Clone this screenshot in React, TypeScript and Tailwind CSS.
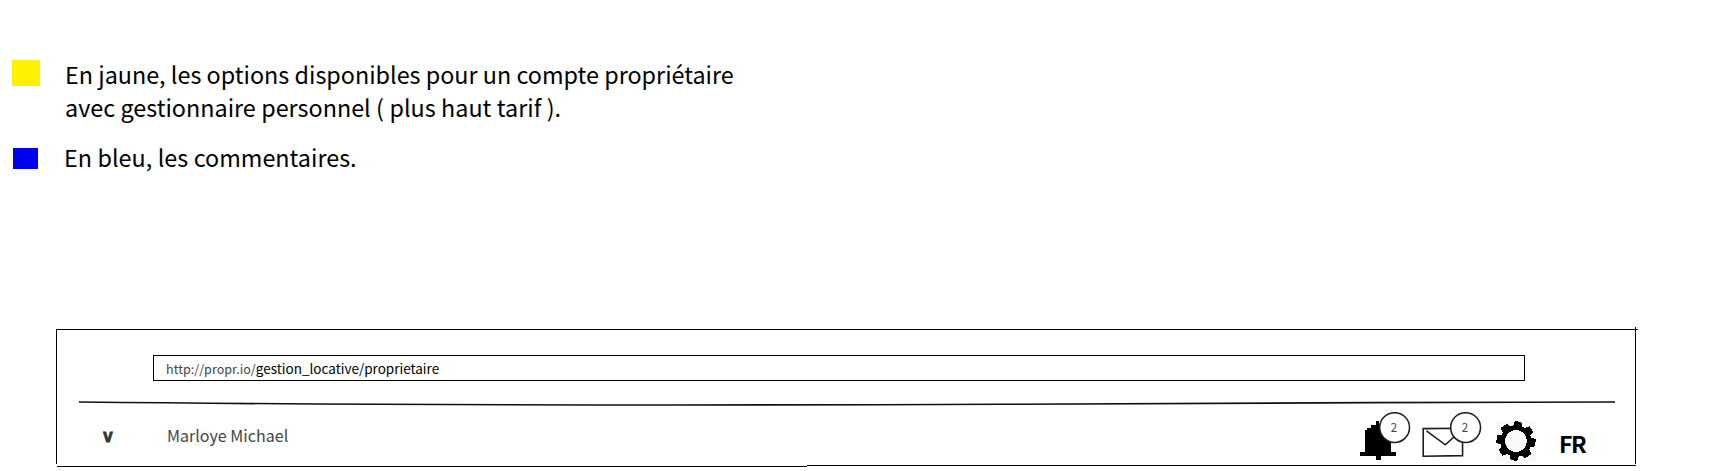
function Bell() {
  return (
    <svg className="block" width="36" height="40" viewBox="0 0 36 40" shapeRendering="crispEdges">
      <path fill="#000" d="M16 0h3v3h4v3h4v3h4v22h5v4H21v4h-5v-4H0v-4h5V9h2V7h4V4h5z" />
    </svg>
  );
}

function Envelope() {
  return (
    <svg className="block" width="42" height="31" viewBox="0 0 42 31" fill="none" stroke="#1d1d20" strokeWidth="1.6">
      <path d="M1.2 1.6L40.5 1.2L40.6 28.6L1.2 29.2Z" />
      <path d="M4.5 3.8L23.3 17.8L38 4.5" />
    </svg>
  );
}

function Gear() {
  return (
    <svg className="block bg-[#f9f9f9]" width="40" height="40" viewBox="-20 -20 40 40" shapeRendering="crispEdges">
      <circle r="13.2" fill="#f9f9f9" stroke="#000" strokeWidth="4.6" />
      {[9, 54, 97, 142, 189, 234, 277, 322].map((a) => (
        <path key={a} transform={`rotate(${a})`} d="M-5.5 -14L-4 -19.8L3.4 -19L4 -14Z" fill="#000" />
      ))}
    </svg>
  );
}

function Badge({ className }: { className: string }) {
  return (
    <svg className={`absolute ${className}`} width="32" height="32" viewBox="0 0 32 32">
      <circle cx="15.6" cy="15.6" r="14.9" fill="#fff" stroke="#1d1d20" strokeWidth="1.5" />
      <text x="15" y="19.8" textAnchor="middle" fontSize="11.5" fill="#444">2</text>
    </svg>
  );
}

export default function App() {
  return (
    <main className="flex h-[471px] w-[1712px] flex-col overflow-hidden bg-white pt-[58px] font-['Noto_Sans_CJK_SC',sans-serif] text-black">
      <section className="flex h-[271px] flex-col gap-[17px] pl-3 text-[23.35px] leading-[33px]">
        <div className="flex gap-[25px]">
          <span className="mt-0.5 h-[26px] w-7 bg-[#fff200]" />
          <p className="whitespace-nowrap">
            En jaune, les options disponibles pour un compte propriétaire
            <br />
            <span className="[word-spacing:0.2px]">avec gestionnaire personnel ( plus haut tarif ).</span>
          </p>
        </div>
        <div className="flex gap-[26px] pl-px">
          <span className="mt-[7px] h-[21px] w-[25px] bg-[#0000ee]" />
          <p className="whitespace-nowrap [word-spacing:0.3px]">En bleu, les commentaires.</p>
        </div>
      </section>

      <section className="relative ml-14 flex h-[138px] w-[1580px] flex-col pt-[26px]">
        <svg className="absolute -top-2 left-0" width="1590" height="150" viewBox="56 321 1590 150">
          <g fill="#000" shapeRendering="crispEdges">
            <rect x="56" y="329" width="1582" height="1" />
            <rect x="56" y="329" width="1" height="135" />
            <rect x="1635" y="327" width="1" height="137" />
            <rect x="57" y="466" width="750" height="1" />
            <rect x="807" y="465" width="829" height="1" />
          </g>
          <path d="M79 402C420 405.8 760 405.2 1000 404.3S1400 402.2 1615 402" fill="none" stroke="#111" strokeWidth="1.6" />
        </svg>
        <div className="mx-[97px] flex h-[26px] w-[1372px] items-baseline border border-black pl-3 leading-6 whitespace-nowrap">
          <span className="text-[12.5px] tracking-[0.05px] text-[#444]">http://propr.io/</span>
          <span className="text-[13.5px]">gestion_locative/proprietaire</span>
        </div>
        <div className="relative flex items-center pt-10 pl-[47px]">
          <span className="mt-0.5 w-16 self-start text-[17px] leading-6 font-bold text-[#333] [-webkit-text-stroke:0.8px_#333]">v</span>
          <span className="mt-0.5 w-[1193px] self-start text-base leading-6 tracking-[0.03px] text-[#444]">Marloye Michael</span>
          <div className="relative mr-[26px]">
            <Bell />
            <Badge className="-top-[9px] left-[19px]" />
          </div>
          <div className="relative mt-[3px] mr-8">
            <Envelope />
            <Badge className="-top-[15px] left-[28px]" />
          </div>
          <Gear />
          <span className="mt-1 ml-[23px] text-[23px] leading-[26px] font-bold tracking-[-1.5px]">FR</span>
        </div>
      </section>
    </main>
  );
}
